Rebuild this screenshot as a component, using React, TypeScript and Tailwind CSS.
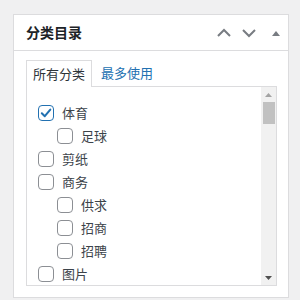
import React from "react";

const font = { fontFamily: '"Noto Sans CJK SC", "Noto Sans", sans-serif' };

type Item = { label: string; level: number; checked?: boolean };
const items: Item[] = [
  { label: "体育", level: 0, checked: true },
  { label: "足球", level: 1 },
  { label: "剪纸", level: 0 },
  { label: "商务", level: 0 },
  { label: "供求", level: 1 },
  { label: "招商", level: 1 },
  { label: "招聘", level: 1 },
  { label: "图片", level: 0 },
];

function Box({ checked }: { checked?: boolean }) {
  return (
    <span
      className={
        "flex h-[16px] w-[16px] shrink-0 items-center justify-center rounded-[4px] border bg-white " +
        (checked ? "border-[#2271b1] border-[1.5px]" : "border-[#8c8f94]")
      }
    >
      {checked && (
        <svg width="14" height="14" viewBox="0 0 14 14">
          <path d="M2.8 7.2 L5.8 10.2 L11.3 3.6" fill="none" stroke="#2271b1" strokeWidth="2" strokeLinecap="round" strokeLinejoin="round" />
        </svg>
      )}
    </span>
  );
}

export default function App() {
  return (
    <div className="h-[300px] w-[300px] overflow-hidden bg-[#f0f0f1] pl-[13px] pt-[14px]" style={font}>
      <div className="h-[284px] w-[276px] border border-[#dcdcde] bg-white">
        <div className="flex h-[36px] items-center border-b border-[#dcdcde] pl-[12px] pr-[7px]">
          <span className="flex-1 text-[14px] font-semibold text-[#1d2327]">分类目录</span>
          <svg width="16" height="12" viewBox="0 0 16 12" className="mr-[9px]">
            <path d="M2 9 L8 3 L14 9" fill="none" stroke="#787c82" strokeWidth="2" />
          </svg>
          <svg width="16" height="12" viewBox="0 0 16 12" className="mr-[14px]">
            <path d="M2 3 L8 9 L14 3" fill="none" stroke="#787c82" strokeWidth="2" />
          </svg>
          <svg width="10" height="8" viewBox="0 0 10 8">
            <path d="M1 7 L5 2 L9 7 Z" fill="#787c82" />
          </svg>
        </div>
        <div className="pl-[12px] pr-[11px] pt-[8px]">
          <div className="flex items-end">
            <div className="relative z-10 -mb-px flex h-[27px] items-center border border-b-0 border-[#dcdcde] bg-white px-[6px] text-[13px] text-[#2c3338]">
              所有分类
            </div>
            <div className="flex h-[27px] items-center px-[9px] text-[13px] text-[#2271b1]">最多使用</div>
          </div>
          <div className="relative flex h-[200px] w-[251px] overflow-hidden border border-[#dcdcde]">
            <ul className="flex-1 pl-[11px] pt-[14px]">
              {items.map((it) => (
                <li
                  key={it.label}
                  className={"flex h-[23px] items-center gap-[8px] text-[13px] text-[#3c434a] " + (it.level ? "pl-[19px]" : "")}
                >
                  <Box checked={it.checked} />
                  <span>{it.label}</span>
                </li>
              ))}
            </ul>
            <div className="flex w-[15px] shrink-0 flex-col items-center bg-[#f1f1f1]">
              <div className="flex h-[15px] w-full items-center justify-center">
                <svg width="7" height="4" viewBox="0 0 7 4"><path d="M0 4 L3.5 0 L7 4 Z" fill="#a3a3a3" /></svg>
              </div>
              <div className="h-[22px] w-[12px] bg-[#c1c1c1]" />
              <div className="flex-1" />
              <div className="flex h-[15px] w-full items-center justify-center">
                <svg width="7" height="4" viewBox="0 0 7 4"><path d="M0 0 L7 0 L3.5 4 Z" fill="#505050" /></svg>
              </div>
            </div>
          </div>
        </div>
      </div>
    </div>
  );
}
